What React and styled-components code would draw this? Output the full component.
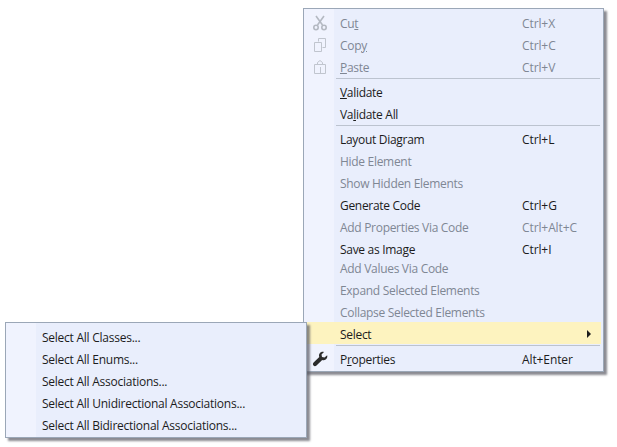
import React from 'react'
import styled, { createGlobalStyle } from 'styled-components'

const GlobalStyle = createGlobalStyle`
  html, body {
    margin: 0;
    padding: 0;
    background: #fff;
    font-family: "Open Sans", "Noto Sans", sans-serif;
  }
`;

const Page = styled.div`
  position: relative;
  width: 617px;
  height: 447px;
  overflow: hidden;
  background: #fff;
`;

const Menu = styled.div`
  position: absolute;
  left: ${props => props.left}px;
  top: ${props => props.top}px;
  width: ${props => props.width}px;
  box-sizing: border-box;
  padding: 2px;
  border: 1px solid #9ba7b7;
  background: linear-gradient(to right, #f0f3fe 0, #f0f3fe 30px, #e9eefc 30px);
  box-shadow: 3px 3px 2px rgba(90, 90, 100, 0.7);
`;

const Row = styled.div`
  display: flex;
  align-items: center;
  box-sizing: border-box;
  height: 22px;
  padding-top: 2px;
  margin-bottom: ${props => props.$overlap ? '-3px' : '0'};
  font-size: 12px;
  letter-spacing: -0.3px;
  color: ${props => props.$disabled ? '#7f8794' : '#1c1c1c'};
  background: ${props => props.$active ? '#fdf3bf' : 'transparent'};
`;

const IconSlot = styled.span`
  display: flex;
  align-items: center;
  justify-content: center;
  flex: none;
  width: 28px;
  margin-right: 6px;
`;

const Label = styled.span`
  flex: none;
  width: 182px;
  white-space: nowrap;
`;

const SubLabel = styled(Label)`
  width: auto;
  letter-spacing: -0.25px;
`;

const Shortcut = styled.span`
  flex: none;
  white-space: nowrap;
  letter-spacing: -0.1px;
`;

const Arrow = styled.span`
  margin-left: 65px;
  width: 0;
  height: 0;
  border-style: solid;
  border-width: 4px 0 4px 4px;
  border-color: transparent transparent transparent #1c1c1c;
`;

const Separator = styled.div`
  height: 1px;
  margin: 1px 1px 1px 30px;
  background: #bcc3cf;
`;

const ScissorsIcon = () => (
  <svg width="16" height="16" viewBox="0 0 16 16" fill="none" stroke="#b4b9c2" strokeWidth="1.6">
    <path d="M4 1l6.500 9M12 1L5.500 10" />
    <circle cx="4" cy="12.500" r="2.200" />
    <circle cx="12" cy="12.500" r="2.200" />
  </svg>
)

const CopyIcon = () => (
  <svg width="16" height="16" viewBox="0 0 16 16" fill="none" stroke="#c0c5ce" strokeWidth="1">
    <path d="M6.500 4.500V1.500h7v9h-3" />
    <path d="M2.500 5.500h7v9h-7z" />
  </svg>
)

const PasteIcon = () => (
  <svg width="16" height="16" viewBox="0 0 16 16" fill="none" stroke="#c0c5ce" strokeWidth="1">
    <path d="M2.500 5.500h11v9h-11zM5.500 5V3.500L8 1.500l2.500 2V5M8.500 8v6.500" />
  </svg>
)

const WrenchIcon = () => (
  <svg width="16" height="16" viewBox="0 0 16 16" fill="#2b2b2b">
    <path d="M15.200 4.200c.4 1.900-.2 3.400-1.500 4.300-1.100.7-2.400.8-3.500.4L4.500 14.500c-.9.900-2.200.9-3 .1-.8-.8-.8-2.100.1-3l5.700-5.600c-.5-1.200-.3-2.600.5-3.700C8.700 1 10.300.5 12 1L9.500 3.500l.5 2.500 2.500.5z" />
  </svg>
)

const mainMenu = [
  { label: <>Cu<u>t</u></>, shortcut: 'Ctrl+X', disabled: true, icon: <ScissorsIcon /> },
  { label: <>Cop<u>y</u></>, shortcut: 'Ctrl+C', disabled: true, icon: <CopyIcon /> },
  { label: <><u>P</u>aste</>, shortcut: 'Ctrl+V', disabled: true, icon: <PasteIcon /> },
  'sep',
  { label: <><u>V</u>alidate</> },
  { label: <>Va<u>l</u>idate All</> },
  'sep',
  { label: 'Layout Diagram', shortcut: 'Ctrl+L' },
  { label: 'Hide Element', disabled: true },
  { label: 'Show Hidden Elements', disabled: true },
  { label: 'Generate Code', shortcut: 'Ctrl+G' },
  { label: 'Add Properties Via Code', shortcut: 'Ctrl+Alt+C', disabled: true },
  { label: 'Save as Image', shortcut: 'Ctrl+I', overlap: true },
  { label: 'Add Values Via Code', disabled: true },
  { label: 'Expand Selected Elements', disabled: true },
  { label: 'Collapse Selected Elements', disabled: true },
  { label: 'Select', active: true, submenu: true },
  'sep',
  { label: <>P<u>r</u>operties</>, shortcut: 'Alt+Enter', icon: <WrenchIcon /> },
]

const subMenu = [
  'Select All Classes...',
  'Select All Enums...',
  'Select All Associations...',
  'Select All Unidirectional Associations...',
  'Select All Bidirectional Associations...',
]

const App = () => {
  return (
    <Page>
      <GlobalStyle />
      <Menu left={303} top={8} width={301}>
        {mainMenu.map((item, i) => item === 'sep' ? <Separator key={i} /> : (
          <Row key={i} $disabled={item.disabled} $active={item.active} $overlap={item.overlap}>
            <IconSlot>{item.icon}</IconSlot>
            <Label>{item.label}</Label>
            {item.shortcut && <Shortcut>{item.shortcut}</Shortcut>}
            {item.submenu && <Arrow />}
          </Row>
        ))}
      </Menu>
      <Menu left={5} top={322} width={302}>
        {subMenu.map(label => (
          <Row key={label}>
            <IconSlot />
            <SubLabel>{label}</SubLabel>
          </Row>
        ))}
      </Menu>
    </Page>
  )
}

export default App
